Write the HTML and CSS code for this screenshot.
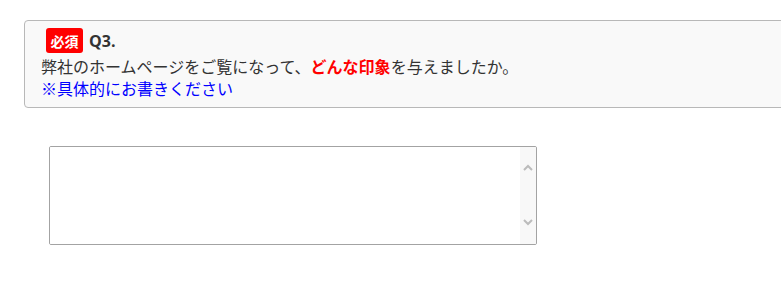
FILE: index.html
```html
<!DOCTYPE html>
<html lang="ja">
<head>
<meta charset="utf-8">
<title>Q3</title>
<link rel="stylesheet" href="styles.css">
</head>
<body>
<div class="page">
  <div class="question">
    <div class="q-head">
      <span class="badge">必須</span>
      <span class="q-num">Q3.</span>
    </div>
    <p class="q-text">弊社のホームページをご覧になって、<strong class="em">どんな印象</strong>を与えましたか。</p>
    <p class="q-text note">※具体的にお書きください</p>
  </div>
  <div class="answer">
    <div class="field">
      <textarea class="input" aria-label="回答"></textarea>
      <div class="scrollbar">
        <svg class="arrow" width="10" height="7" viewBox="0 0 10 7"><path d="M1 6 L5 2 L9 6" fill="none" stroke="#bcbcbc" stroke-width="2"/></svg>
        <svg class="arrow" width="10" height="7" viewBox="0 0 10 7"><path d="M1 1 L5 5 L9 1" fill="none" stroke="#bcbcbc" stroke-width="2"/></svg>
      </div>
    </div>
  </div>
</div>
</body>
</html>
```

FILE: styles.css
```css
html, body {
  margin: 0;
  padding: 0;
  overflow: hidden;
  background: #ffffff;
}
body {
  font-family: "Noto Sans CJK JP", "Noto Sans", sans-serif;
  color: #333333;
}
.page {
  padding: 20px 0 0 24px;
  width: 820px;
}
.question {
  width: 790px;
  box-sizing: border-box;
  border: 1px solid #b8b8b8;
  border-radius: 4px;
  background: #f9f9f9;
  padding: 7px 16px 8px 16px;
}
.q-head {
  display: flex;
  align-items: center;
  gap: 6px;
  height: 25px;
  margin-left: 5px;
  margin-bottom: 2px;
}
.badge {
  display: flex;
  align-items: center;
  justify-content: center;
  width: 37px;
  height: 25px;
  background: #ff0000;
  border-radius: 3px;
  color: #ffffff;
  font-size: 14px;
  font-weight: 700;
  line-height: 1;
}
.q-num {
  font-family: "Open Sans", "Noto Sans", sans-serif;
  font-size: 16px;
  font-weight: 700;
  color: #333333;
  line-height: 1;
}
.q-text {
  margin: 0;
  font-size: 16px;
  line-height: 22px;
}
.em {
  color: #ff0000;
  font-weight: 700;
}
.note {
  color: #0000ff;
}
.answer {
  padding: 38px 0 0 25px;
}
.field {
  display: flex;
  width: 488px;
  height: 99px;
  box-sizing: border-box;
  border: 1px solid #a3a3a3;
  border-radius: 2px;
  background: #ffffff;
  overflow: hidden;
}
.input {
  flex: 1;
  border: none;
  outline: none;
  resize: none;
  margin: 0;
  padding: 4px 6px;
  background: #ffffff;
  font-family: "Noto Sans CJK JP", sans-serif;
  font-size: 16px;
  overflow: hidden;
}
.scrollbar {
  width: 16px;
  background: #f8f8f8;
  display: flex;
  flex-direction: column;
  align-items: center;
  justify-content: space-between;
  padding: 17px 0 18px;
}
.arrow {
  display: block;
}
```
